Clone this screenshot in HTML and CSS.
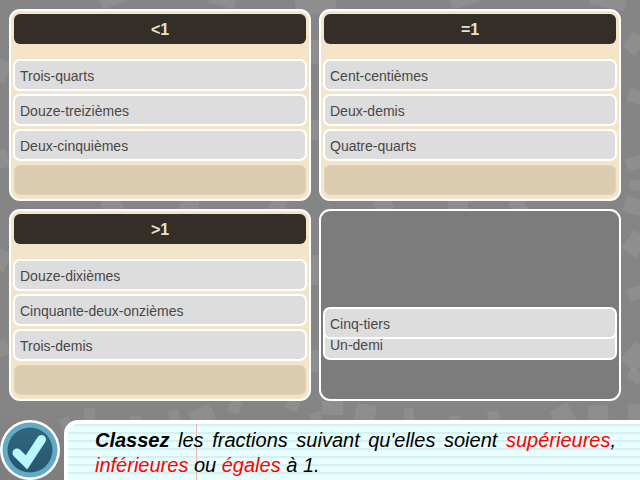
FILE: index.html
```html
<!DOCTYPE html>
<html lang="fr">
<head>
<meta charset="utf-8">
<title>Classez les fractions</title>
<link rel="stylesheet" href="styles.css">
</head>
<body>
<svg class="texture" width="640" height="480" viewBox="0 0 640 480" aria-hidden="true">
  <g fill="#fff" fill-opacity="0.08">
    <rect x="295" y="-10" width="40" height="24" transform="rotate(-12 315 2)"/>
    <rect x="100" y="-6" width="24" height="12" transform="rotate(-20 112 0)"/>
    <rect x="210" y="-6" width="26" height="12" transform="rotate(15 223 0)"/>
    <rect x="450" y="-6" width="28" height="12" transform="rotate(-15 464 0)"/>
    <rect x="590" y="-4" width="36" height="12" transform="rotate(12 608 2)"/>
    <rect x="-6" y="60" width="14" height="22" transform="rotate(20 1 71)"/>
    <rect x="-4" y="150" width="12" height="18" transform="rotate(-15 2 159)"/>
    <rect x="-5" y="250" width="13" height="20" transform="rotate(25 1 260)"/>
    <rect x="-4" y="340" width="12" height="16" transform="rotate(-20 2 348)"/>
    <rect x="311" y="40" width="8" height="24"/>
    <rect x="311" y="120" width="8" height="20"/>
    <rect x="311" y="255" width="8" height="30"/>
    <rect x="311" y="350" width="8" height="22"/>
    <rect x="102" y="197" width="20" height="18" transform="rotate(-12 112 206)"/>
    <rect x="180" y="199" width="18" height="16" transform="rotate(15 189 207)"/>
    <rect x="270" y="198" width="15" height="14" transform="rotate(30 277 205)"/>
    <rect x="375" y="198" width="17" height="14" transform="rotate(-25 383 205)"/>
    <rect x="448" y="199" width="20" height="12" transform="rotate(12 458 205)"/>
    <rect x="510" y="198" width="16" height="15" transform="rotate(-20 518 205)"/>
    <rect x="624" y="198" width="18" height="16" transform="rotate(18 633 206)"/>
    <rect x="626" y="35" width="16" height="18" transform="rotate(40 634 44)"/>
    <rect x="628" y="90" width="14" height="13" transform="rotate(15 635 96)"/>
    <rect x="626" y="157" width="16" height="13" transform="rotate(-15 634 163)"/>
    <rect x="630" y="180" width="12" height="10"/>
    <rect x="626" y="233" width="18" height="22" transform="rotate(35 635 244)"/>
    <rect x="628" y="287" width="14" height="13" transform="rotate(-20 635 293)"/>
    <rect x="625" y="345" width="20" height="24" transform="rotate(40 635 357)"/>
    <rect x="628" y="370" width="14" height="12" transform="rotate(30 635 376)"/>
    <rect x="84" y="408" width="11" height="13" transform="rotate(-4 90 414)"/>
    <rect x="60" y="418" width="11" height="11" transform="rotate(-25 65 423)"/>
    <rect x="130" y="416" width="11" height="8"/>
    <rect x="169" y="410" width="11" height="13" transform="rotate(-12 175 416)"/>
    <rect x="190" y="408" width="24" height="16" transform="rotate(-25 202 416)"/>
    <rect x="229" y="400" width="12" height="13" transform="rotate(20 235 406)"/>
    <rect x="286" y="400" width="13" height="10" transform="rotate(20 292 405)"/>
    <rect x="310" y="412" width="12" height="12" transform="rotate(-15 316 418)"/>
    <rect x="322" y="401" width="21" height="14"/>
    <rect x="355" y="404" width="20" height="22" transform="rotate(12 365 415)"/>
    <rect x="404" y="408" width="10" height="14" transform="rotate(-5 409 415)"/>
    <rect x="449" y="416" width="11" height="8"/>
    <rect x="488" y="411" width="11" height="13" transform="rotate(-12 493 417)"/>
    <rect x="553" y="406" width="20" height="20" transform="rotate(-30 563 416)"/>
    <rect x="588" y="405" width="20" height="20" transform="rotate(-5 598 415)"/>
    <rect x="628" y="404" width="12" height="16"/>
  </g>
</svg>
<main class="board">
  <section class="bin">
    <h2 class="bin-title">&lt;1</h2>
    <ul class="cards">
      <li class="card">Trois-quarts</li>
      <li class="card">Douze-treizièmes</li>
      <li class="card">Deux-cinquièmes</li>
      <li class="slot"></li>
    </ul>
  </section>
  <section class="bin">
    <h2 class="bin-title">=1</h2>
    <ul class="cards">
      <li class="card">Cent-centièmes</li>
      <li class="card">Deux-demis</li>
      <li class="card">Quatre-quarts</li>
      <li class="slot"></li>
    </ul>
  </section>
  <section class="bin">
    <h2 class="bin-title">&gt;1</h2>
    <ul class="cards">
      <li class="card">Douze-dixièmes</li>
      <li class="card">Cinquante-deux-onzièmes</li>
      <li class="card">Trois-demis</li>
      <li class="slot"></li>
    </ul>
  </section>
  <section class="source">
    <div class="pile">
      <div class="card card-under">Un-demi</div>
      <div class="card card-over">Cinq-tiers</div>
    </div>
  </section>
</main>
<footer class="footer">
  <button class="check" type="button" aria-label="Valider">
    <svg width="64" height="64" viewBox="0 0 64 64">
      <defs>
        <linearGradient id="disc" x1="0" y1="0" x2="0" y2="1">
          <stop offset="0" stop-color="#2f6780"/>
          <stop offset="1" stop-color="#28566e"/>
        </linearGradient>
      </defs>
      <circle cx="30" cy="30" r="30" fill="#fff"/>
      <circle cx="30" cy="30" r="27.5" fill="#62abc4"/>
      <circle cx="30" cy="30" r="22.5" fill="url(#disc)"/>
      <path d="M17 33 L26.500 42.500 L41.500 19.500" fill="none" stroke="#b9f7fb" stroke-width="9" stroke-linecap="round" stroke-linejoin="miter"/>
    </svg>
  </button>
  <div class="note">
    <p class="note-text"><b>Classez</b> les fractions suivant qu'elles soient <span class="red">supérieures</span>, <span class="red">inférieures</span> ou <span class="red">égales</span> à 1.</p>
  </div>
</footer>
</body>
</html>
```
FILE: styles.css
```css
* { box-sizing: border-box; }
html, body { margin: 0; padding: 0; }
body {
  position: relative;
  width: 640px;
  height: 480px;
  overflow: hidden;
  background: linear-gradient(#858585, #858585 85%, #7e7e7e);
  font-family: "Liberation Sans", Arial, sans-serif;
}
.texture { position: absolute; left: 0; top: 0; }
.board {
  position: relative;
  display: grid;
  grid-template-columns: 302px 302px;
  grid-template-rows: 192px 192px;
  gap: 8px;
  padding: 9px 0 0 9px;
}
.bin {
  border: 2px solid #fff;
  border-radius: 11px;
  background: #f4e5c8;
  padding: 3px;
}
.bin-title {
  margin: 0;
  height: 30px;
  line-height: 31px;
  background: #332f28;
  border-radius: 6px;
  color: #e8e2d0;
  font-size: 16px;
  font-weight: bold;
  text-align: center;
}
.cards {
  list-style: none;
  margin: 15px -1px 0;
  padding: 0;
  display: flex;
  flex-direction: column;
  gap: 3px;
}
.card {
  height: 32px;
  line-height: 31px;
  padding-left: 5px;
  border: 2px solid #fff;
  border-radius: 7px;
  background: #dddddd;
  color: #484848;
  font-size: 14px;
}
.slot {
  height: 30px;
  margin: 1px 1px 0;
  border: 1px solid #e2d4bb;
  border-radius: 6px;
  background: #dbccb0;
}
.source {
  border: 2px solid #fff;
  border-radius: 11px;
  background: #7c7c7c;
  display: flex;
  align-items: flex-end;
  padding: 0 2px 39px;
}
.pile {
  width: 100%;
  position: relative;
  height: 53px;
}
.pile .card { position: absolute; left: 0; right: 0; }
.card-under { top: 21px; }
.card-over { top: 0; }
.footer {
  position: absolute;
  left: 0;
  top: 420px;
  width: 640px;
  height: 60px;
}
.check {
  position: absolute;
  left: 0;
  top: 0;
  padding: 0;
  border: 0;
  background: none;
  line-height: 0;
}
.note {
  position: absolute;
  left: 64px;
  top: 0;
  width: 576px;
  height: 60px;
  border-top: 4px solid #fff;
  border-left: 4px solid #fff;
  border-top-left-radius: 14px;
  background-color: #e9ffff;
  background-image:
    linear-gradient(#eab4b8, #eab4b8),
    repeating-linear-gradient(#d4f0f1 0, #d4f0f1 2px, #e9ffff 2px, #e9ffff 8px);
  background-size: 1px 100%, 100% 100%;
  background-position: 128px 0, 0 0;
  background-repeat: no-repeat;
  padding: 4px 24px 0 27px;
}
.note-text {
  margin: 0;
  font-size: 20px;
  line-height: 25px;
  font-style: italic;
  text-align: justify;
  color: #000;
}
.red { color: #ff0000; }
```
